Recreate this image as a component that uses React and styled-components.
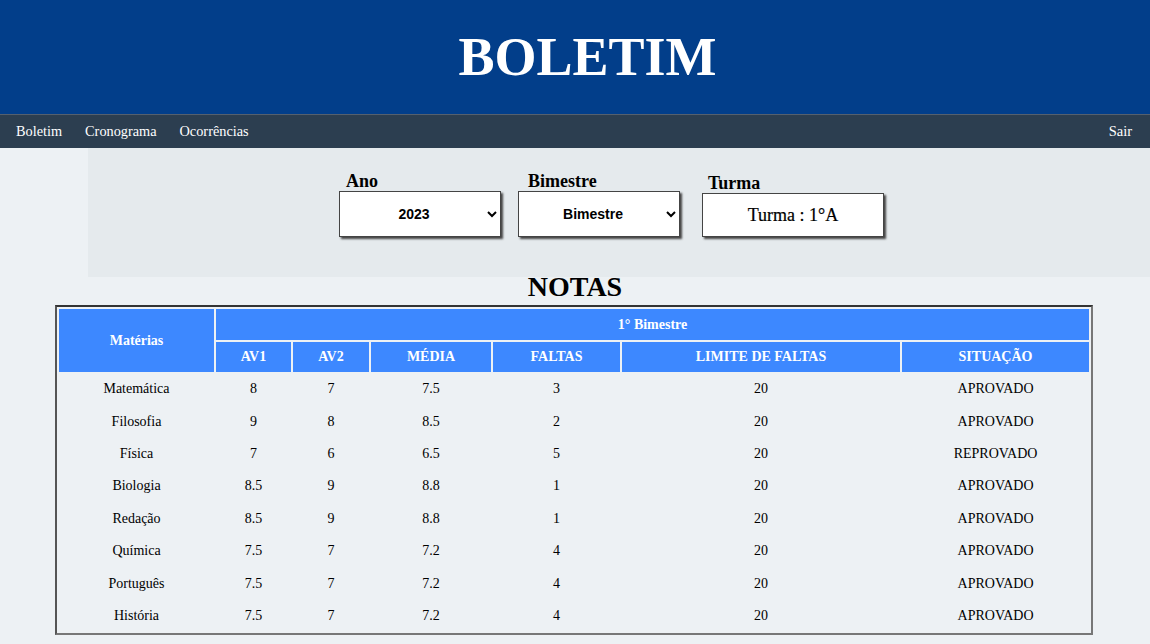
import React from 'react'
import styled, { createGlobalStyle } from 'styled-components'

const GlobalStyle = createGlobalStyle`
  body {
    margin: 0;
    background: #edf1f4;
    font-family: "Liberation Serif", "Times New Roman", serif;
    overflow-x: hidden;
  }
`

const Header = styled.header`
  background-color: #023e8a;
  height: 114px;
  display: flex;
  align-items: center;
  justify-content: center;
  padding-left: 25px;
  box-sizing: border-box;
`

const Title = styled.h1`
  margin: 0;
  color: white;
  font-size: 54px;
  font-weight: bold;
  line-height: 1;
`

const Nav = styled.nav`
  background-color: #2c3e50;
  border-top: 1px solid #55606e;
  height: 34px;
  box-sizing: border-box;
  display: flex;
  align-items: center;
  justify-content: space-between;
  padding: 0 18px 0 4.5px;
`

const NavList = styled.ul`
  list-style-type: none;
  margin: 0;
  padding: 0;
  display: flex;
`

const NavItem = styled.li`
  color: white;
  font-size: 14.3px;
  padding: 0 11.5px;
`

const Logout = styled.span`
  color: white;
  font-size: 14.5px;
`

const FilterPanel = styled.section`
  background-color: #e5eaed;
  margin-left: 88px;
  height: 129px;
  box-sizing: border-box;
  padding: 23px 15px 0 0;
  display: flex;
  justify-content: center;
  align-items: flex-start;
  gap: 17px;
`

const Field = styled.div`
  display: flex;
  flex-direction: column;
  margin-left: ${props => props.offset || 0}px;
`

const Label = styled.label`
  font-size: 18px;
  font-weight: bold;
  line-height: 20px;
  padding-left: ${props => props.indent}px;
  margin-top: ${props => props.drop || 0}px;
`

const Select = styled.select`
  width: 162px;
  height: 46px;
  background: white;
  border: 1px solid #444;
  box-shadow: 2px 2px 2px #444;
  font-family: "Liberation Sans", Arial, sans-serif;
  font-weight: bold;
  font-size: 14px;
  text-align: center;
  color: black;
`

const ClassBox = styled.div`
  width: 182px;
  height: 44px;
  box-sizing: border-box;
  background: white;
  border: 1px solid #444;
  box-shadow: 2px 2px 2px #444;
  display: flex;
  align-items: center;
  justify-content: center;
  font-size: 18px;
  -webkit-text-stroke: 0.2px black;
`

const Heading = styled.h2`
  text-align: center;
  font-size: 28px;
  font-weight: bold;
  margin: -7px 0 1px;
  line-height: 34px;
`

const Table = styled.table`
  box-sizing: border-box;
  width: 1037px;
  margin: 0 0 0 55px;
  border: 2px solid #777;
  border-top-color: #333;
  border-left-color: #555;
  border-spacing: 2px;
  table-layout: fixed;
`

const Th = styled.th`
  background-color: #3d88ff;
  color: white;
  font-size: 14px;
  font-weight: bold;
  height: ${props => props.h}px;
  padding: 0;
`

const Td = styled.td`
  text-align: center;
  font-size: 14px;
  height: 30.4px;
  padding: 0;
`

const notas = [
  ['Matemática', '8', '7', '7.5', '3', '20', 'APROVADO'],
  ['Filosofia', '9', '8', '8.5', '2', '20', 'APROVADO'],
  ['Física', '7', '6', '6.5', '5', '20', 'REPROVADO'],
  ['Biologia', '8.5', '9', '8.8', '1', '20', 'APROVADO'],
  ['Redação', '8.5', '9', '8.8', '1', '20', 'APROVADO'],
  ['Química', '7.5', '7', '7.2', '4', '20', 'APROVADO'],
  ['Português', '7.5', '7', '7.2', '4', '20', 'APROVADO'],
  ['História', '7.5', '7', '7.2', '4', '20', 'APROVADO'],
]

const widths = [155, 75, 76, 120, 127, 278, 187]

const App = () => {
  return (
    <>
      <GlobalStyle />
      <Header>
        <Title>BOLETIM</Title>
      </Header>
      <Nav>
        <NavList>
          <NavItem>Boletim</NavItem>
          <NavItem>Cronograma</NavItem>
          <NavItem>Ocorrências</NavItem>
        </NavList>
        <Logout>Sair</Logout>
      </Nav>
      <FilterPanel>
        <Field>
          <Label indent={7}>Ano</Label>
          <Select defaultValue="2023">
            <option>2023</option>
          </Select>
        </Field>
        <Field>
          <Label indent={10}>Bimestre</Label>
          <Select defaultValue="Bimestre">
            <option>Bimestre</option>
          </Select>
        </Field>
        <Field offset={5}>
          <Label indent={6} drop={2}>Turma</Label>
          <ClassBox>Turma : 1°A</ClassBox>
        </Field>
      </FilterPanel>
      <Heading>NOTAS</Heading>
      <Table>
        <colgroup>
          {widths.map((w, i) => <col key={i} style={{ width: w }} />)}
        </colgroup>
        <thead>
          <tr>
            <Th rowSpan={2}>Matérias</Th>
            <Th colSpan={6} h={31}>1° Bimestre</Th>
          </tr>
          <tr>
            {['AV1', 'AV2', 'MÉDIA', 'FALTAS', 'LIMITE DE FALTAS', 'SITUAÇÃO'].map(col => (
              <Th key={col} h={30}>{col}</Th>
            ))}
          </tr>
        </thead>
        <tbody>
          {notas.map(row => (
            <tr key={row[0]}>
              {row.map((cell, i) => <Td key={i}>{cell}</Td>)}
            </tr>
          ))}
        </tbody>
      </Table>
    </>
  )
}

export default App
